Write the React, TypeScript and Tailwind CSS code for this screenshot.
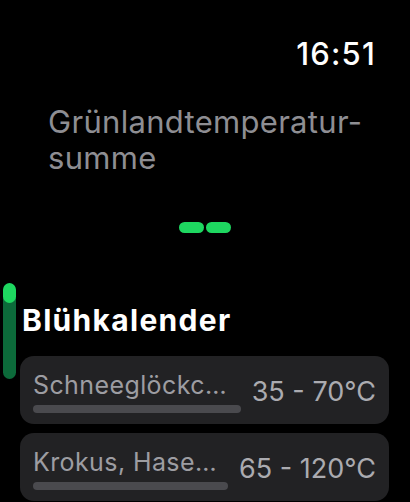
const ITEMS = [
  { name: "Schneeglöckc…", range: "35 - 70°C" },
  { name: "Krokus, Hase…", range: "65 - 120°C" },
];

function BloomRow({ name, range }: { name: string; range: string }) {
  return (
    <div className="flex items-start gap-[11px] h-[68px] rounded-[14px] bg-[#222224] pl-[13px] pr-[13px]">
      <div className="flex-1 min-w-0 flex flex-col pt-[15px]">
        <span className="text-[25px] leading-[28px] tracking-[0.4px] text-[#9d9da2] whitespace-nowrap overflow-hidden">{name}</span>
        <div className="mt-[6px] h-[8px] rounded-full bg-[#4a4a4e]" />
      </div>
      <span className="shrink-0 pt-[20px] text-[27px] leading-[32px] text-[#ababb0] whitespace-nowrap">{range}</span>
    </div>
  );
}

export default function App() {
  return (
    <div
      className="relative w-[410px] h-[502px] overflow-hidden bg-black text-white"
      style={{ fontFamily: "Inter, 'Noto Sans', sans-serif" }}
    >
      {/* status bar */}
      <div className="flex justify-end pt-[36px] pr-[34px]">
        <span className="text-[31px] leading-[36px] font-medium tracking-[1.2px]">16:51</span>
      </div>

      {/* page title */}
      <div className="mt-[32px] pl-[48px] text-[31px] leading-[36px] tracking-[0.3px] text-[#8e8e93]">
        <div>Grünlandtemperatur-</div>
        <div>summe</div>
      </div>

      {/* page dots */}
      <div className="mt-[46px] flex justify-center gap-[2px]">
        <div className="w-[25px] h-[11px] rounded-full bg-[#1ed760]" />
        <div className="w-[25px] h-[11px] rounded-full bg-[#1ed760]" />
      </div>

      {/* scroll indicator */}
      <div className="absolute left-[3px] top-[283px] w-[13px] h-[96px] rounded-full bg-[#0c6a3a] overflow-hidden">
        <div className="h-[20px] rounded-full bg-[#1ed760]" />
      </div>

      <div className="mt-[69px] pl-[22px] text-[30px] leading-[36px] font-bold tracking-[1.3px]">Blühkalender</div>

      <div className="mt-[18px] ml-[20px] mr-[21px] flex flex-col gap-[9px]">
        {ITEMS.map((it) => (
          <BloomRow key={it.name} name={it.name} range={it.range} />
        ))}
      </div>
    </div>
  );
}
